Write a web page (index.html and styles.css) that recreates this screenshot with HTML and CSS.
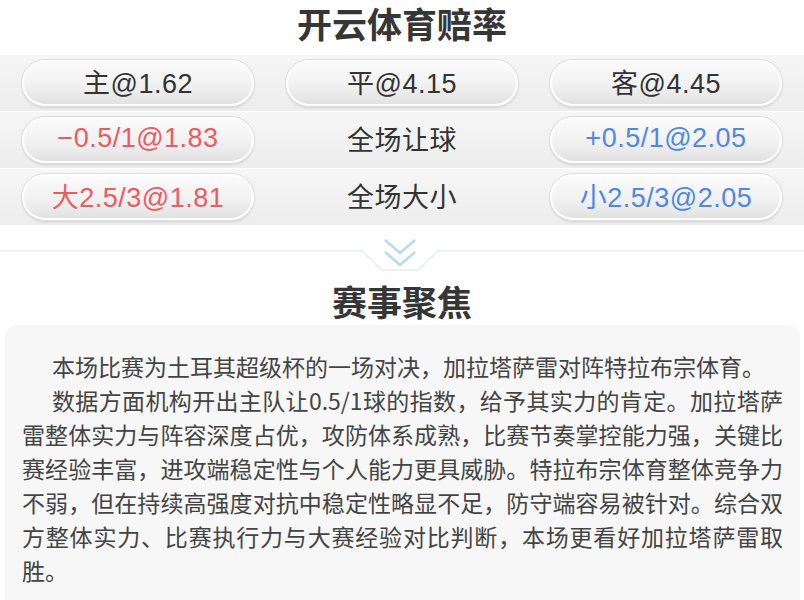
FILE: index.html
```html
<!DOCTYPE html>
<html lang="zh-CN">
<head>
    <meta charset="UTF-8">
    <title>开云体育赔率</title>
    <link rel="stylesheet" href="styles.css">
</head>
<body>
    <h1 class="title">开云体育赔率</h1>

    <div class="odds">
        <div class="odds-row">
            <div class="bet">主@1.62</div>
            <div class="bet">平@4.15</div>
            <div class="bet">客@4.45</div>
        </div>
        <div class="odds-row">
            <div class="bet home">&minus;0.5/1@1.83</div>
            <div class="label">全场让球</div>
            <div class="bet away">+0.5/1@2.05</div>
        </div>
        <div class="odds-row">
            <div class="bet home">大2.5/3@1.81</div>
            <div class="label">全场大小</div>
            <div class="bet away">小2.5/3@2.05</div>
        </div>
    </div>

    <div class="divider">
        <svg width="804" height="53" viewBox="0 0 804 53">
            <!-- faint line with a notch under the arrow -->
            <path d="M0 26 H362 L382 45 H418 L438 26 H804" fill="none" stroke="#eef1f4" stroke-width="2"/>
            <path d="M385 15 L400 28 L415 15" fill="none" stroke="#b9d9f2" stroke-width="2.5"/>
            <path d="M385 27 L400 40 L415 27" fill="none" stroke="#b9d9f2" stroke-width="2.5"/>
        </svg>
    </div>

    <h2 class="title">赛事聚焦</h2>

    <div class="focus-box">
        <p>本场比赛为土耳其超级杯的一场对决，加拉塔萨雷对阵特拉布宗体育。</p>
        <p>数据方面机构开出主队让0.5/1球的指数，给予其实力的肯定。加拉塔萨雷整体实力与阵容深度占优，攻防体系成熟，比赛节奏掌控能力强，关键比赛经验丰富，进攻端稳定性与个人能力更具威胁。特拉布宗体育整体竞争力不弱，但在持续高强度对抗中稳定性略显不足，防守端容易被针对。综合双方整体实力、比赛执行力与大赛经验对比判断，本场更看好加拉塔萨雷取胜。</p>
    </div>
</body>
</html>
```

FILE: styles.css
```css
body {
    margin: 0;
    background-color: #fff;
    color: #333;
    font-family: "Noto Sans CJK SC", sans-serif;
}

.title {
    margin: 0;
    font-size: 35px;
    font-weight: bold;
    line-height: 46px;
    text-align: center;
    color: #363636;
}

.odds {
    margin-top: 9px;
    display: flex;
    flex-direction: column;
    gap: 1px;
}

.odds-row {
    display: grid;
    grid-template-columns: repeat(3, 1fr);
    gap: 32px;
    padding: 5px 22px;
    background: linear-gradient(#f6f6f6, #ededed);
}

.bet, .label {
    box-sizing: border-box;
    height: 46px;
    padding-bottom: 3px;
    display: flex;
    align-items: center;
    justify-content: center;
    font-family: "Liberation Sans", "Noto Sans CJK SC", sans-serif;
    font-size: 27px;
    letter-spacing: 0.5px;
    color: #333;
}

.bet {
    border-radius: 23px;
    border: 2px solid #fff;
    background: linear-gradient(#fbfbfb, #f1f1f1 55%, #e2e2e2);
    box-shadow: 0 0 0 1px #dcdcdc, 0 2px 3px rgba(0, 0, 0, 0.12);
}

.bet.home {
    color: #ee5a62;
}

.bet.away {
    color: #4f88e4;
}

.divider {
    height: 53px;
}

.divider svg {
    display: block;
}

.focus-box {
    margin: 1px 4px 0 5px;
    padding: 24px 17px;
    background-color: #f7f7f7;
    border-radius: 12px;
    font-size: 23px;
    line-height: 34px;
    color: #444;
}

.focus-box p {
    margin: 0;
    text-indent: 30px;
    text-align: justify;
}
```
